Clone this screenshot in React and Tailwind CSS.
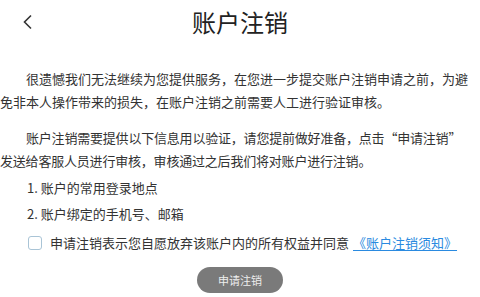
export default function App() {
  return (
    <div
      className="h-[297px] w-[480px] overflow-hidden bg-white text-[#333]"
      style={{ fontFamily: '"Noto Sans CJK SC", "Noto Sans", sans-serif' }}
    >
      {/* Header */}
      <div className="relative flex h-11 items-center justify-center">
        <svg
          className="absolute left-[22px] top-[14px]"
          width="12"
          height="16"
          viewBox="0 0 12 16"
          fill="none"
          stroke="#333"
          strokeWidth="1.6"
        >
          <path d="M9 1.5 L2.5 8 L9 14.5" />
        </svg>
        <h1 className="text-[24px] leading-none text-[#222]">账户注销</h1>
      </div>

      <div className="pt-[23px] text-[13px] leading-[23px]">
        <p className="indent-[26px]">
          很遗憾我们无法继续为您提供服务，在您进一步提交账户注销申请之前，为避免非本人操作带来的损失，在账户注销之前需要人工进行验证审核。
        </p>
        <p className="mt-[13px] indent-[26px] tracking-[-0.2px]">
          账户注销需要提供以下信息用以验证，请您提前做好准备，点击“申请注销”
          <br />
          发送给客服人员进行审核，审核通过之后我们将对账户进行注销。
        </p>
        <p className="mt-[4px] pl-[27px]">1. 账户的常用登录地点</p>
        <p className="mt-[3px] pl-[27px]">2. 账户绑定的手机号、邮箱</p>

        <label className="mt-[6px] flex items-center pl-[28px]">
          <span className="h-[14px] w-[14px] rounded-[3px] border border-[#a9c4d6] bg-white" />
          <span className="ml-[8px]">申请注销表示您自愿放弃该账户内的所有权益并同意</span>
          <a className="ml-[4px] text-[#2a8ae0] underline underline-offset-2">《账户注销须知》</a>
        </label>

        <div className="mt-[13px] flex justify-center">
          <button className="h-[26px] w-[86px] rounded-full bg-[#7a7a7a] text-[11px] leading-none text-[#eee]">
            申请注销
          </button>
        </div>
      </div>
    </div>
  );
}
